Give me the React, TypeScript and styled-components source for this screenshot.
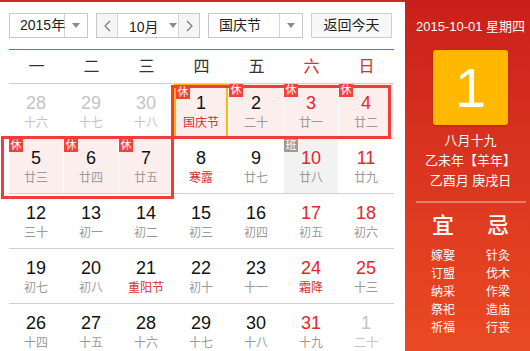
import styled, { createGlobalStyle } from "styled-components";

const GlobalStyle = createGlobalStyle`
  html, body {
    margin: 0;
    padding: 0;
    background: #fff;
    overflow: hidden;
  }
  body {
    font-family: "Liberation Sans", "Noto Sans CJK SC", sans-serif;
  }
`;

const FONT = `"Liberation Sans", "Noto Sans CJK SC", sans-serif`;

// page frame: calendar on the left, almanac panel on the right
const Page = styled.div`
  display: flex;
  width: 530px;
  height: 351px;
  overflow: hidden;
  font-family: ${FONT};
`;

const Main = styled.div`
  position: relative;
  width: 405px;
  flex: none;
  border-top: 2px solid #cc2a1f;
  padding: 11px 0 0 9px;
  box-sizing: border-box;
`;

const Toolbar = styled.div`
  display: flex;
  gap: 8px;
  height: 25px;
`;

const SelectBox = styled.div<{ $w: number; $split: number }>`
  display: grid;
  grid-template-columns: ${(p) => p.$split}px 1fr;
  width: ${(p) => p.$w}px;
  height: 25px;
  box-sizing: border-box;
  border: 1px solid #c8c8c8;
  background: #fff;
`;

const SelectText = styled.div<{ $pad: number }>`
  padding-left: ${(p) => p.$pad}px;
  font-size: 14px;
  line-height: 23px;
  color: #222;
  white-space: nowrap;
  border-right: 1px solid #d4d4d4;
`;

const ArrowCell = styled.div`
  display: flex;
  align-items: center;
  justify-content: center;
`;

const Caret = styled.span`
  width: 0;
  height: 0;
  border-left: 4px solid transparent;
  border-right: 4px solid transparent;
  border-top: 5px solid #8a8a8a;
`;

const MonthGroup = styled.div`
  display: grid;
  grid-template-columns: 21px 60px 21px;
  width: 104px;
  height: 25px;
  box-sizing: border-box;
  border: 1px solid #c8c8c8;
`;

const StepButton = styled.div<{ $side: "l" | "r" }>`
  display: flex;
  align-items: center;
  justify-content: center;
  background: #f5f5f5;
  ${(p) => (p.$side === "l" ? "border-right" : "border-left")}: 1px solid #d4d4d4;
`;

const MonthLabel = styled.div`
  display: flex;
  align-items: center;
  gap: 10px;
  padding-left: 11px;
  font-size: 14px;
  color: #222;
  white-space: nowrap;
`;

const TodayButton = styled.div`
  width: 81px;
  height: 25px;
  box-sizing: border-box;
  border: 1px solid #cfcfcf;
  background: #f7f7f7;
  font-size: 14px;
  line-height: 23px;
  text-align: center;
  color: #222;
`;

const RedRule = styled.div`
  width: 385px;
  height: 1px;
  margin-top: 11px;
  background: #e4473b;
`;

const WeekHeader = styled.div`
  display: grid;
  grid-template-columns: repeat(7, 55px);
  height: 33px;
  border-bottom: 1px solid #d0d0d0;
  width: 385px;
`;

const WeekDay = styled.div<{ $red: boolean }>`
  text-align: center;
  font-size: 16px;
  line-height: 33px;
  color: ${(p) => (p.$red ? "#e0292b" : "#333")};
`;

const WeekRow = styled.div`
  display: grid;
  grid-template-columns: repeat(7, 55px);
  height: 54px;
  width: 385px;
  border-bottom: 1px solid #d0d0d0;
`;

type Tone = "plain" | "rest" | "work";

const Cell = styled.div<{ $tone: Tone; $today: boolean }>`
  position: relative;
  display: flex;
  flex-direction: column;
  align-items: center;
  padding-top: 9px;
  box-sizing: border-box;
  margin-right: 1px;
  background: ${(p) =>
    p.$tone === "rest" ? "#fdeeee" : p.$tone === "work" ? "#f2f2f2" : "transparent"};
  ${(p) => p.$today && "border: 2px solid #ffb400; padding-top: 7px;"}
`;

const DayNum = styled.div<{ $color: string }>`
  font-family: "Liberation Sans", Arial, sans-serif;
  font-size: 18px;
  line-height: 20px;
  color: ${(p) => p.$color};
`;

const Lunar = styled.div<{ $color: string }>`
  margin-top: 2px;
  font-size: 12px;
  line-height: 16px;
  color: ${(p) => p.$color};
`;

const Badge = styled.span<{ $grey: boolean }>`
  position: absolute;
  top: 0;
  left: 0;
  z-index: 3;
  width: 14px;
  height: 13px;
  background: ${(p) => (p.$grey ? "#9b9b9b" : "#f4423a")};
  color: #fff;
  font-size: 11px;
  line-height: 13px;
  text-align: center;
`;

// hand-drawn highlight frames over the holiday days
const Marker = styled.div`
  position: absolute;
  z-index: 2;
  box-sizing: border-box;
  border: 3px solid #f23c3c;
  pointer-events: none;
`;

const Side = styled.div`
  width: 125px;
  flex: none;
  display: flex;
  flex-direction: column;
  align-items: center;
  padding-left: 6px;
  box-sizing: border-box;
  background: linear-gradient(180deg, #c91f1a 0%, #d93420 45%, #ea4a22 100%);
  color: #fff;
`;

const DateLine = styled.div`
  margin-top: 17px;
  margin-left: 0;
  font-size: 13px;
  line-height: 20px;
  white-space: nowrap;
`;

const BigDay = styled.div`
  margin-top: 13px;
  width: 75px;
  height: 75px;
  border-radius: 3px;
  background: #ffb800;
  box-shadow: 0 1px 2px rgba(120, 20, 0, 0.35);
  font-family: "Liberation Sans", Arial, sans-serif;
  font-size: 56px;
  line-height: 75px;
  text-align: center;
`;

const LunarInfo = styled.div`
  margin-top: 6px;
  font-size: 13px;
  line-height: 20px;
  text-align: center;
  white-space: nowrap;
`;

const Divider = styled.div`
  width: 110px;
  height: 2px;
  margin-top: 10px;
  background: rgba(255, 255, 255, 0.35);
`;

const TwoCols = styled.div<{ $gapTop: number }>`
  display: grid;
  grid-template-columns: 55px 55px;
  margin-top: ${(p) => p.$gapTop}px;
`;

const BigWord = styled.div`
  text-align: center;
  font-size: 22px;
  line-height: 26px;
  font-weight: 500;
`;

const ItemList = styled.div`
  display: flex;
  flex-direction: column;
  align-items: center;
  font-size: 12px;
  line-height: 18px;
`;

const Chevron = ({ dir }: { dir: "l" | "r" }) => (
  <svg width="7" height="12" viewBox="0 0 7 12">
    <polyline
      points={dir === "l" ? "6,1 1,6 6,11" : "1,1 6,6 1,11"}
      fill="none"
      stroke="#777"
      strokeWidth="1.2"
    />
  </svg>
);

type Day = {
  n: number;
  lunar: string;
  other?: boolean;
  weekend?: boolean;
  fest?: boolean;
  badge?: "休" | "班";
  today?: boolean;
};

const rows: Day[][] = [
  [
    { n: 28, lunar: "十六", other: true },
    { n: 29, lunar: "十七", other: true },
    { n: 30, lunar: "十八", other: true },
    { n: 1, lunar: "国庆节", fest: true, badge: "休", today: true },
    { n: 2, lunar: "二十", badge: "休" },
    { n: 3, lunar: "廿一", weekend: true, badge: "休" },
    { n: 4, lunar: "廿二", weekend: true, badge: "休" },
  ],
  [
    { n: 5, lunar: "廿三", badge: "休" },
    { n: 6, lunar: "廿四", badge: "休" },
    { n: 7, lunar: "廿五", badge: "休" },
    { n: 8, lunar: "寒露", fest: true },
    { n: 9, lunar: "廿七" },
    { n: 10, lunar: "廿八", weekend: true, badge: "班" },
    { n: 11, lunar: "廿九", weekend: true },
  ],
  [
    { n: 12, lunar: "三十" },
    { n: 13, lunar: "初一" },
    { n: 14, lunar: "初二" },
    { n: 15, lunar: "初三" },
    { n: 16, lunar: "初四" },
    { n: 17, lunar: "初五", weekend: true },
    { n: 18, lunar: "初六", weekend: true },
  ],
  [
    { n: 19, lunar: "初七" },
    { n: 20, lunar: "初八" },
    { n: 21, lunar: "重阳节", fest: true },
    { n: 22, lunar: "初十" },
    { n: 23, lunar: "十一" },
    { n: 24, lunar: "霜降", weekend: true, fest: true },
    { n: 25, lunar: "十三", weekend: true },
  ],
  [
    { n: 26, lunar: "十四" },
    { n: 27, lunar: "十五" },
    { n: 28, lunar: "十六" },
    { n: 29, lunar: "十七" },
    { n: 30, lunar: "十八" },
    { n: 31, lunar: "十九", weekend: true },
    { n: 1, lunar: "二十", other: true },
  ],
];

const weekdays = ["一", "二", "三", "四", "五", "六", "日"];
const good = ["嫁娶", "订盟", "纳采", "祭祀", "祈福"];
const bad = ["针灸", "伐木", "作梁", "造庙", "行丧"];

function DayCell({ d }: { d: Day }) {
  const tone: Tone = d.badge === "休" ? "rest" : d.badge === "班" ? "work" : "plain";
  const numColor = d.other ? "#c4c4c4" : d.weekend ? "#e3262b" : "#111";
  const lunarColor = d.other ? "#c4c4c4" : d.fest ? "#d8302b" : "#9a9a9a";
  return (
    <Cell $tone={tone} $today={!!d.today}>
      {d.badge && <Badge $grey={d.badge === "班"}>{d.badge}</Badge>}
      <DayNum $color={numColor}>{d.n}</DayNum>
      <Lunar $color={lunarColor}>{d.lunar}</Lunar>
    </Cell>
  );
}

export default function App() {
  return (
    <>
      <GlobalStyle />
      <Page>
        <Main>
          <Toolbar>
            <SelectBox $w={79} $split={55}>
              <SelectText $pad={10}>2015年</SelectText>
              <ArrowCell>
                <Caret />
              </ArrowCell>
            </SelectBox>
            <MonthGroup>
              <StepButton $side="l">
                <Chevron dir="l" />
              </StepButton>
              <MonthLabel>
                10月 <Caret />
              </MonthLabel>
              <StepButton $side="r">
                <Chevron dir="r" />
              </StepButton>
            </MonthGroup>
            <SelectBox $w={95} $split={71}>
              <SelectText $pad={10}>国庆节</SelectText>
              <ArrowCell>
                <Caret />
              </ArrowCell>
            </SelectBox>
            <TodayButton>返回今天</TodayButton>
          </Toolbar>
          <RedRule />
          <WeekHeader>
            {weekdays.map((w, i) => (
              <WeekDay key={w} $red={i >= 5}>
                {w}
              </WeekDay>
            ))}
          </WeekHeader>
          {rows.map((row, r) => (
            <WeekRow key={r}>
              {row.map((d, i) => (
                <DayCell key={i} d={d} />
              ))}
            </WeekRow>
          ))}
          <Marker style={{ left: 171, top: 83, width: 220, height: 54 }} />
          <Marker style={{ left: 1, top: 134, width: 173, height: 63 }} />
        </Main>
        <Side>
          <DateLine>2015-10-01 星期四</DateLine>
          <BigDay>1</BigDay>
          <LunarInfo>
            八月十九
            <br />
            乙未年【羊年】
            <br />
            乙酉月 庚戌日
          </LunarInfo>
          <Divider />
          <TwoCols $gapTop={10}>
            <BigWord>宜</BigWord>
            <BigWord>忌</BigWord>
          </TwoCols>
          <TwoCols $gapTop={8}>
            <ItemList>
              {good.map((g) => (
                <span key={g}>{g}</span>
              ))}
            </ItemList>
            <ItemList>
              {bad.map((b) => (
                <span key={b}>{b}</span>
              ))}
            </ItemList>
          </TwoCols>
        </Side>
      </Page>
    </>
  );
}
